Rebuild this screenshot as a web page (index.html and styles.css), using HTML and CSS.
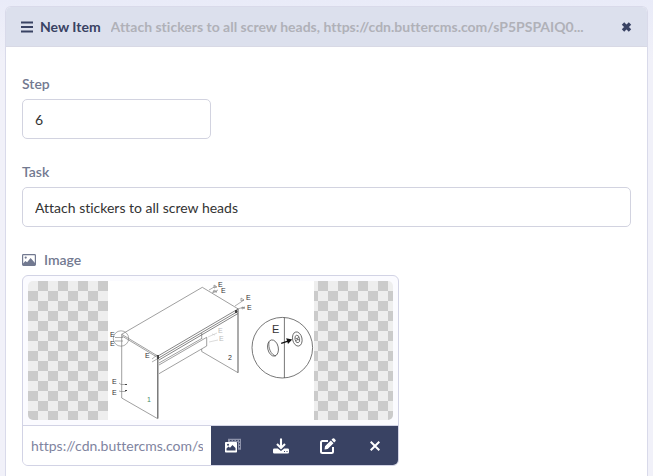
FILE: index.html
```html
<!DOCTYPE html>
<html lang="en">
<head>
    <meta charset="UTF-8">
    <meta name="viewport" content="width=device-width, initial-scale=1.0">
    <title>New Item</title>
    <link rel="stylesheet" href="styles.css">
</head>
<body>

<form class="item">
    <header class="item-header">
        <button type="button" class="icon-button" aria-label="Reorder">
            <svg width="13" height="12" viewBox="0 0 13 12" fill="currentColor"><path d="M0 0.5h12v2H0zM0 5h12v2H0zM0 9.5h12v2H0z"/></svg>
        </button>
        <h2 class="item-title">New Item</h2>
        <p class="item-summary">Attach stickers to all screw heads, https://cdn.buttercms.com/sP5PSPAIQ0...</p>
        <button type="button" class="icon-button remove" aria-label="Remove item">
            <svg width="11" height="10" viewBox="0 0 11 10"><path d="M2 1.5l7 7M9 1.5l-7 7" stroke="currentColor" stroke-width="3.4"/></svg>
        </button>
    </header>

    <div class="item-body">
        <div class="field">
            <label for="step">Step</label>
            <input type="text" id="step" class="text-input short" value="6">
        </div>

        <div class="field">
            <label for="task">Task</label>
            <input type="text" id="task" class="text-input" value="Attach stickers to all screw heads">
        </div>

        <div class="field">
            <label for="image">
                <svg width="14" height="12" viewBox="0 0 14 12"><rect x="0.6" y="0.6" width="12.8" height="10.8" rx="0.8" fill="none" stroke="currentColor" stroke-width="1.2"/><circle cx="3.7" cy="3.6" r="1.1" fill="currentColor"/><path d="M1 11V9.5l2.4-2.6 1.7 1.3L8.6 4 13 9v2z" fill="currentColor"/></svg>
                Image
            </label>
            <div class="media">
                <div class="preview">
                    <svg class="drawing" width="206" height="139" viewBox="0 0 206 139" role="img" aria-label="Desk assembly diagram">
                        <rect width="206" height="139" fill="#fff"/>
                        <!-- desk top and side panels -->
                        <g fill="none" stroke="#777" stroke-width="0.7">
                            <path d="M13.7 53.3L94.3 6.3L130.3 28M13.7 53.3L49.7 75"/>
                            <path d="M13.7 53.3V117L49.7 137.7"/>
                            <path d="M14 55L49.7 76.5"/>
                            <path d="M93.7 52V58M93.7 68V70.5L130 91.7"/>
                            <path d="M51 84L98.7 56.3V65L51 92.7M51 82L93.7 57.5"/>
                        </g>
                        <g fill="none" stroke="#666">
                            <path d="M49.8 75V137.5" stroke-width="1.3"/>
                            <path d="M130 28V91.7" stroke-width="1.1"/>
                            <path d="M50 75L130 28M51 76.8L130 30.3M51 79L130 32.5" stroke-width="0.8"/>
                        </g>
                        <!-- sticker places -->
                        <g fill="none" stroke="#777" stroke-width="0.6">
                            <circle cx="13" cy="57.5" r="7.7"/>
                            <path d="M7 56.5h8M7 60h8M11 102l2 1.5h5M11 110l2 .5h5"/>
                            <path d="M101 9l7-4M104 12l6-3M127 25l9-6M129 28l8-2"/>
                            <path d="M106 4l3 2-3 1zM106 9l3 2h-4zM133 17l3 2-3 1zM134 26l3 1-3 1z"/>
                            <path d="M44 78l5-4M44 81l5-3"/>
                        </g>
                        <path d="M17 103h2v1h-2zM17 109h2v1h-2zM49 74h2v4h-2zM127 29h2v3h-2z" fill="#444"/>
                        <path d="M100 56l9-4M101 61l9-2M104 53l3 1" fill="none" stroke="#ccc" stroke-width="0.7"/>
                        <!-- magnified sticker -->
                        <g fill="none" stroke="#555" stroke-width="0.8">
                            <circle cx="174.3" cy="66.7" r="30.3"/>
                            <path d="M176.4 36.5V97"/>
                            <ellipse cx="165" cy="67" rx="5.3" ry="8.2" transform="rotate(-12 165 67)"/>
                            <path d="M161 61c-1 6 2 13 7 14"/>
                            <ellipse cx="189.3" cy="58" rx="4.7" ry="7.2" transform="rotate(-12 189.3 58)"/>
                            <ellipse cx="189.3" cy="58" rx="2.3" ry="3.8" transform="rotate(-12 189.3 58)"/>
                            <path d="M187.5 57l3.5 2M190.5 56l-2 4"/>
                        </g>
                        <path d="M173 61.7l6-2-.8-2.4 6 1.3-4.2 4.3-.6-1.900-6 2z" fill="#111"/>
                        <g class="marks">
                            <text x="2" y="56">E</text>
                            <text x="2" y="65">E</text>
                            <text x="37" y="77">E</text>
                            <text x="4" y="103">E</text>
                            <text x="4" y="114">E</text>
                            <text x="110" y="6">E</text>
                            <text x="113" y="12">E</text>
                            <text x="138" y="19">E</text>
                            <text x="139" y="29">E</text>
                            <text x="110" y="52" class="faint">E</text>
                            <text x="111" y="60" class="faint">E</text>
                            <text x="39" y="121" class="green">1</text>
                            <text x="120" y="79">2</text>
                            <text x="164" y="52" class="large">E</text>
                        </g>
                    </svg>
                </div>
                <div class="media-bar">
                    <input type="text" id="image" class="url-input" value="https://cdn.buttercms.com/sP5PSPAIQ0">
                    <div class="media-actions">
                        <button type="button" aria-label="Media library">
                            <svg width="17" height="15" viewBox="0 0 17 15"><path d="M3 0.8h13v11h-3V4H3z" fill="#8e93ab"/><path d="M5 2h1.5v1H5zM8 2h1.5v1H8zM11 2h1.5v1H11zM14 2h1v1.5h-1zM14 5h1v1.5h-1zM14 8h1v1.5h-1z" fill="#394263"/><rect x="0" y="4" width="12" height="10.5" rx="0.8" fill="#fff"/><path d="M1.5 12.5v-2l2-2 1.5 1.2L7.5 7l3 3v2.5z" fill="#394263"/><circle cx="3" cy="6.8" r="1" fill="#394263"/></svg>
                        </button>
                        <button type="button" aria-label="Download">
                            <svg width="16" height="16" viewBox="0 0 16 16"><path d="M8 0.5v9M4 6l4 4 4-4" fill="none" stroke="#fff" stroke-width="2.1"/><path d="M1.3 10.5h3.5L8 13l3.2-2.5h3.5q1.3 0 1.3 1.3v2.4q0 1.3-1.3 1.3H1.3Q0 15.5 0 14.2v-2.4q0-1.3 1.3-1.3z" fill="#fff"/><path d="M11 13h1v1h-1zM13.5 13h1v1h-1z" fill="#394263"/></svg>
                        </button>
                        <button type="button" aria-label="Edit">
                            <svg width="16" height="16" viewBox="0 0 16 16"><path d="M8 3H2.5Q1 3 1 4.5v9Q1 15 2.5 15h9q1.5 0 1.5-1.5V9" fill="none" stroke="#fff" stroke-width="2"/><path d="M5 8.3l5.8-5.8 2.7 2.7L7.7 11l-3.2.5zM11.5 1.8L12.7.6q.8-.8 1.6 0l1.1 1.1q.8.8 0 1.6l-1.2 1.2z" fill="#fff"/></svg>
                        </button>
                        <button type="button" aria-label="Clear image">
                            <svg width="10" height="10" viewBox="0 0 10 10"><path d="M0.7 0.7l8.6 8.6M9.3 0.7l-8.6 8.6" stroke="#fff" stroke-width="2"/></svg>
                        </button>
                    </div>
                </div>
            </div>
        </div>
    </div>
</form>

</body>
</html>
```
FILE: styles.css
```css
* {
    box-sizing: border-box;
}

body {
    margin: 0;
    padding: 6px 5px 0;
    background: linear-gradient(#e9ebf8, #f1f1f9 60px);
    font-family: "Lato", "Open Sans", sans-serif;
    font-size: 14px;
    font-variant-ligatures: none;
    line-height: 20px;
}

.item {
    min-height: calc(100vh - 6px);
    background-color: #fff;
    border: 1px solid #d9daea;
    border-bottom: none;
    border-radius: 6px 6px 0 0;
}

.item-header {
    display: flex;
    align-items: center;
    height: 40px;
    padding: 0 15px;
    background-color: #dce0ed;
    border-bottom: 1px solid #d8d9e5;
    border-radius: 5px 5px 0 0;
    color: #394263;
}

.item-title,
.item-summary {
    margin: 0;
    font-size: 14px;
    font-weight: 700;
    white-space: nowrap;
}

.item-title {
    margin-left: 6px;
}

.item-summary {
    margin-left: 10px;
    overflow: hidden;
    color: #b0b1b8;
}

.icon-button {
    display: flex;
    flex-shrink: 0;
    padding: 0;
    border: none;
    background: none;
    color: inherit;
    cursor: pointer;
}

.remove {
    margin-left: auto;
}

.item-body {
    display: flex;
    flex-direction: column;
    gap: 23px;
    padding: 27px 16px 10px;
}

.field label {
    display: flex;
    align-items: center;
    gap: 8px;
    margin-bottom: 5px;
    color: #727990;
    font-weight: 600;
}

.text-input {
    display: block;
    width: 100%;
    height: 40px;
    padding: 0 12px;
    border: 1px solid #d2d3e0;
    border-radius: 5px;
    background-color: #fff;
    color: #333;
    font: inherit;
}

.short {
    max-width: 189px;
}

.media {
    max-width: 377px;
    border: 1px solid #d2d3e5;
    border-radius: 6px;
    background-color: #fbfbff;
    overflow: hidden;
}

.preview {
    display: flex;
    justify-content: center;
    margin: 5px;
    padding-left: 1px;
    border-radius: 5px;
    background: repeating-conic-gradient(#cbcbcb 0 25%, #eee 0 50%) 0 0 / 20px 20px;
    overflow: hidden;
}

.drawing {
    display: block;
}

.marks {
    fill: #333;
    font-family: "Liberation Sans", sans-serif;
    font-size: 7px;
}

.marks .large {
    font-size: 11px;
}

.marks .faint {
    fill: #bbb;
}

.marks .green {
    fill: #486;
}

.media-bar {
    display: flex;
    height: 40px;
    border-top: 1px solid #d2d3e5;
}

.url-input {
    flex: 1;
    min-width: 0;
    margin: 0;
    padding: 0 8px;
    border: none;
    background-color: #fff;
    color: #8084a0;
    font: inherit;
}

.media-actions {
    display: flex;
    width: 50%;
    background-color: #394263;
}

.media-actions button {
    display: flex;
    flex: 1;
    align-items: center;
    justify-content: center;
    padding: 0;
    border: none;
    background: none;
    cursor: pointer;
}
```
